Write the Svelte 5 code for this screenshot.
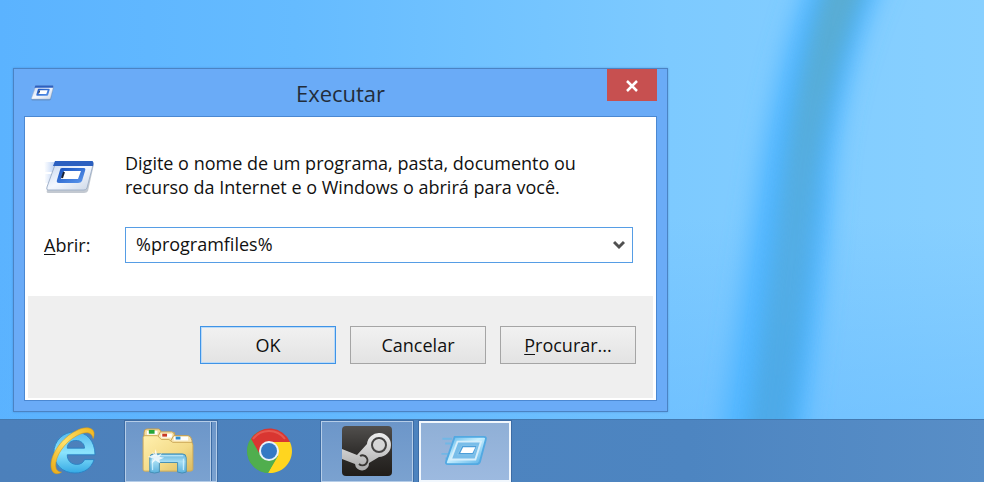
<script>
  let command = $state('%programfiles%');

  const tasks = [
    { id: 'ie', name: 'Internet Explorer', state: '' },
    { id: 'explorer', name: 'Windows Explorer', state: 'open stacked' },
    { id: 'chrome', name: 'Google Chrome', state: '' },
    { id: 'steam', name: 'Steam', state: 'open' },
    { id: 'run', name: 'Executar', state: 'open active' }
  ];
</script>

{#snippet runIcon(cls)}
  <svg class={cls} viewBox="0 0 50 34" aria-hidden="true">
    <defs>
      <linearGradient id="run-trail" x1="0" x2="1">
        <stop offset="0" stop-color="#8fb4f0" stop-opacity="0" />
        <stop offset="1" stop-color="#7fa8ec" />
      </linearGradient>
      <linearGradient id="run-body" x1="0" y1="0" x2="1" y2="1">
        <stop offset="0" stop-color="#c3d4ee" />
        <stop offset="0.5" stop-color="#f4f8ff" />
        <stop offset="1" stop-color="#cbd6e6" />
      </linearGradient>
      <linearGradient id="run-inner" x1="0" y1="0" x2="1" y2="1">
        <stop offset="0" stop-color="#164fbd" />
        <stop offset="1" stop-color="#5c98ee" />
      </linearGradient>
    </defs>
    <path d="M0 2H14L9 12H1zM1 14H8L5 23H1z" fill="url(#run-trail)" opacity="0.7" />
    <path d="M12 4H50L44 31Q43 33 40 33H4Q2 33 3 30z" fill="#53647a" opacity="0.35" />
    <path d="M12 2H48Q50 2 49 5L43 28Q42 30 40 30H4Q2 30 3 27z" fill="url(#run-body)" stroke="#a3b3ca" />
    <path d="M11 1H48Q50 1 49 6H9z" fill="#2c60c0" />
    <path d="M18 8H40Q42 8 41 11L38 21Q37 23 34 23H15Q12 23 13 20L16 10Q16 8 18 8z" fill="url(#run-inner)" />
    <path d="M20 11H37L34 19H17z" fill="#fff" />
    <path d="M20 12L18 18" stroke="#151f33" stroke-width="2" />
  </svg>
{/snippet}

<div class="screen">
  <svg class="wallpaper" viewBox="0 0 984 482" preserveAspectRatio="none" aria-hidden="true">
    <defs>
      <linearGradient id="sky" x1="0" x2="1">
        <stop offset="0" stop-color="#5bb3ff" />
        <stop offset="0.3" stop-color="#65bbff" />
        <stop offset="0.68" stop-color="#7dcaff" />
        <stop offset="1" stop-color="#88d0ff" />
      </linearGradient>
      <linearGradient id="floor" x1="0" y1="0" x2="0" y2="1">
        <stop offset="0.45" stop-color="#5ab2ff" stop-opacity="0" />
        <stop offset="0.9" stop-color="#5ab2ff" stop-opacity="0.4" />
      </linearGradient>
      <linearGradient id="stem" x1="0" y1="0" x2="0" y2="1">
        <stop offset="0" stop-color="#5cabc8" />
        <stop offset="0.5" stop-color="#54ace0" />
        <stop offset="1" stop-color="#49a5e6" />
      </linearGradient>
      <filter id="soft" x="-50%" y="-10%" width="200%" height="120%"><feGaussianBlur stdDeviation="12" /></filter>
      <filter id="softer" x="-50%" y="-10%" width="200%" height="120%"><feGaussianBlur stdDeviation="9" /></filter>
    </defs>
    <rect width="984" height="482" fill="url(#sky)" />
    <rect width="984" height="482" fill="url(#floor)" />
    <path d="M816 -40L892 -40Q848 50 834 160Q824 300 802 430L796 520L712 520L722 430Q742 290 757 190Q776 60 816 -40z" fill="#4fb5ff" filter="url(#soft)" />
    <path d="M834 -40L876 -40Q834 60 819 170Q808 300 790 430L784 520L740 520L748 430Q768 290 782 190Q798 60 834 -40z" fill="url(#stem)" opacity="0.85" filter="url(#softer)" />
  </svg>

  <main class="desktop">
    <section class="window" aria-labelledby="title">
      <header class="titlebar">
        {@render runIcon('title-icon')}
        <h1 id="title">Executar</h1>
        <button class="close" aria-label="Fechar">
          <svg viewBox="0 0 14 12" aria-hidden="true"><path d="M2 1L12 11M12 1L2 11" /></svg>
        </button>
      </header>

      <form class="client" onsubmit={(e) => e.preventDefault()}>
        <div class="content">
          {@render runIcon('big-icon')}
          <p>Digite o nome de um programa, pasta, documento ou recurso da Internet e o Windows o abrirá para você.</p>
          <label for="command"><u>A</u>brir:</label>
          <div class="combo">
            <input id="command" type="text" bind:value={command} spellcheck="false" autocomplete="off" />
            <button type="button" class="arrow" aria-label="Mostrar lista">
              <svg viewBox="0 0 12 10" aria-hidden="true"><path d="M1 2L6 7L11 2" /></svg>
            </button>
          </div>
        </div>
        <div class="actions">
          <button type="submit" class="default">OK</button>
          <button type="button">Cancelar</button>
          <button type="button"><span><u>P</u>rocurar...</span></button>
        </div>
      </form>
    </section>
  </main>

  <nav class="taskbar">
    {#each tasks as task (task.id)}
      <button class="task {task.state}" aria-label={task.name}>
        {#if task.id === 'ie'}
          <svg class="ie" viewBox="0 0 48 50" aria-hidden="true">
            <defs>
              <linearGradient id="ie-blue" x1="0" y1="0" x2="0" y2="1">
                <stop offset="0" stop-color="#55b9ed" />
                <stop offset="0.5" stop-color="#8be4fd" />
                <stop offset="1" stop-color="#35a9e4" />
              </linearGradient>
              <linearGradient id="ie-gold" x1="0" y1="1" x2="1" y2="0">
                <stop offset="0" stop-color="#e9a913" />
                <stop offset="0.5" stop-color="#ffe16a" />
                <stop offset="1" stop-color="#f0b51c" />
              </linearGradient>
            </defs>
            <path fill-rule="evenodd" d="M26 5C38 5 47 14 47 29H18C18 35 22 39 28 39C32 39 35 37 36 34H46C43 43 36 48 26 48C13 48 4 39 4 27C4 14 14 5 26 5zM18 22H36C36 17 32 14 27 14C22 14 18 17 18 22z" fill="url(#ie-blue)" stroke="#2b83c4" />
            <path d="M12 47C7 51 1 48 1 40C1 27 13 11 27 4C36 -1 45 0 46 6C46 8 46 10 45 12C44 5 37 4 28 9C15 16 5 31 6 41C6 45 9 47 12 47z" fill="url(#ie-gold)" stroke="#d79a17" stroke-width="0.6" />
          </svg>
        {:else if task.id === 'explorer'}
          <svg class="folder" viewBox="0 0 54 48" aria-hidden="true">
            <defs>
              <linearGradient id="folder-front" x1="0" y1="0" x2="1" y2="1">
                <stop offset="0" stop-color="#fff0ae" />
                <stop offset="0.6" stop-color="#f3da87" />
                <stop offset="1" stop-color="#d9b95f" />
              </linearGradient>
              <linearGradient id="folder-stand" x1="0" y1="0" x2="0" y2="1">
                <stop offset="0" stop-color="#62b2db" />
                <stop offset="0.4" stop-color="#a4dcf3" />
                <stop offset="1" stop-color="#5ab1dd" />
              </linearGradient>
            </defs>
            <path d="M2 5Q2 1 5 1H17Q19 1 20 5H34V42H2z" fill="#f5dda0" stroke="#c49d4c" />
            <path d="M5 3H16V7H5z" fill="#fff" /><path d="M7 2H13V6H7z" fill="#25a638" />
            <path d="M17 8L19 4H31Q33 4 34 8H46V40H17z" fill="#f8e6af" stroke="#c9a45a" />
            <path d="M20 6H31V10H20z" fill="#fff" /><path d="M21 6H26V9H21z" fill="#c93b24" />
            <path d="M30 13L33 8H48Q51 8 52 13V40H30z" fill="#f7e5b0" stroke="#c29d51" />
            <path d="M33 9H48V13H33z" fill="#fff" /><path d="M35 9H40V12H35z" fill="#2c8dd0" />
            <path d="M1 10Q1 8 3 8H16L20 12H28L32 15H51Q53 15 53 18V43Q53 45 50 45H3Q1 45 1 43z" fill="url(#folder-front)" stroke="#ceaa59" />
            <path d="M8 46V31Q8 27 12 27H42Q46 27 46 31V46Q42 48 37 46V36H18V46Q13 48 8 46z" fill="url(#folder-stand)" stroke="#448eb5" />
            <path d="M11 29H43M11 32V44M43 32V44" stroke="#d5f5ff" fill="none" />
            <path d="M14 22L16 29L21 26L18 30L23 31L18 33L19 37L14 34L10 37L12 32L6 30L12 28L10 25L13 27z" fill="#fff" opacity="0.8" />
          </svg>
        {:else if task.id === 'chrome'}
          <svg class="chrome" viewBox="0 0 46 46" aria-hidden="true">
            <circle cx="23" cy="23" r="22" fill="#4eab4a" />
            <path d="M5 11A22 22 0 0 1 44 14H23L13 25z" fill="#d93631" />
            <path d="M44 14A22 22 0 0 1 22 45L32 28L23 14z" fill="#ffd51f" />
            <path d="M5 11A22 22 0 0 0 22 45L31 28L14 27z" fill="#50ae4e" />
            <circle cx="23" cy="23" r="10" fill="#e9f3fa" />
            <circle cx="23" cy="23" r="8" fill="#3479c4" />
            <path d="M7 11A20 20 0 0 1 39 11" fill="none" stroke="#fa8d7b" opacity="0.4" stroke-width="2" />
          </svg>
        {:else if task.id === 'steam'}
          <svg class="steam" viewBox="0 0 50 50" aria-hidden="true">
            <defs>
              <linearGradient id="steam-back" x1="0" y1="0" x2="0" y2="1">
                <stop offset="0" stop-color="#514f4d" />
                <stop offset="0.5" stop-color="#32302e" />
                <stop offset="1" stop-color="#201d1a" />
              </linearGradient>
              <linearGradient id="steam-arm" x1="0" y1="0" x2="0" y2="1">
                <stop offset="0" stop-color="#eeeeee" />
                <stop offset="1" stop-color="#aaaaaa" />
              </linearGradient>
            </defs>
            <rect width="50" height="50" rx="4" fill="url(#steam-back)" />
            <path d="M0 23L15 29L25 18A12 12 0 1 1 37 31L27 37A7 7 0 0 1 13 38L0 33z" fill="url(#steam-arm)" />
            <circle cx="37" cy="19" r="7" fill="none" stroke="#454443" stroke-width="2" />
            <circle cx="37" cy="19" r="5" fill="#d6d6d6" />
            <path d="M18 30A5 5 0 1 1 17 38" fill="none" stroke="#393734" stroke-width="2" />
          </svg>
        {:else}
          <svg class="run" viewBox="0 0 50 34" aria-hidden="true">
            <defs>
              <linearGradient id="glass" x1="0" y1="0" x2="1" y2="1">
                <stop offset="0" stop-color="#58b2e7" />
                <stop offset="0.45" stop-color="#c8f0ff" />
                <stop offset="1" stop-color="#4fabe5" />
              </linearGradient>
            </defs>
            <path d="M1 4H11M4 9H10M0 20H7M4 25H6" stroke="#71b7e5" stroke-width="2" />
            <path d="M14 2H45Q48 2 47 5L41 28Q40 31 37 31H7Q4 31 5 28z" fill="url(#glass)" stroke="#52a9e2" stroke-width="2" />
            <path d="M17 7H42L36 26H10z" fill="#78bde9" stroke="#d5eefb" stroke-width="2" />
            <path d="M22 11H38L34 21H17z" fill="#4c9ed9" stroke="#8cc8ec" />
            <path d="M23 13H36L33 19H20z" fill="#fff" />
          </svg>
        {/if}
      </button>
    {/each}
  </nav>
</div>

<style>
  :global(body) {
    margin: 0;
  }
  .screen {
    position: relative;
    display: flex;
    flex-direction: column;
    min-height: 100vh;
    overflow: hidden;
    color: #111;
    font-family: "Open Sans", "Noto Sans", sans-serif;
    font-size: 18px;
    line-height: 24px;
  }
  .wallpaper {
    position: absolute;
    inset: 0;
    width: 100%;
    height: 100%;
    z-index: -1;
  }
  button, input {
    box-sizing: border-box;
    margin: 0;
    padding: 0;
    color: inherit;
    font: inherit;
  }
  .desktop {
    flex: 1;
    padding: 68px 13px 7px;
  }
  .window {
    box-sizing: border-box;
    max-width: 655px;
    padding: 0 10px 10px;
    border: 1px solid #4b83c3;
    background: #6aabf7;
    box-shadow: 0 0 2px rgba(40, 100, 170, 0.4);
  }
  .titlebar {
    display: grid;
    grid-template-columns: 50px 1fr 50px;
    height: 47px;
  }
  .title-icon {
    align-self: center;
    width: 24px;
    height: 16px;
    margin-left: 6px;
  }
  h1 {
    margin: 0;
    color: #222d3b;
    font-size: 22px;
    font-weight: 400;
    line-height: 48px;
    text-align: center;
  }
  .close {
    display: grid;
    place-items: center;
    height: 32px;
    border: 0;
    background: #c75050;
  }
  .close svg {
    width: 14px;
    height: 12px;
    margin-top: 2px;
    fill: none;
    stroke: #fff;
    stroke-width: 2.5;
  }
  .client {
    padding-bottom: 2px;
    border: 1px solid #4b88d2;
    background: #fff;
  }
  .content {
    display: grid;
    grid-template-columns: 81px 1fr;
    row-gap: 28px;
    align-items: center;
    padding: 34px 23px 33px 19px;
  }
  .big-icon {
    width: 50px;
    height: 34px;
    margin-top: 4px;
  }
  .content p {
    max-width: 480px;
    margin: 0;
  }
  .combo {
    display: flex;
    box-sizing: border-box;
    height: 36px;
    border: 1px solid #569de5;
    background: #fff;
  }
  .combo input {
    flex: 1;
    min-width: 0;
    padding: 0 10px 2px;
    border: 0;
    outline: 0;
    background: none;
  }
  .arrow {
    display: grid;
    place-items: center;
    width: 26px;
    border: 0;
    background: none;
  }
  .arrow svg {
    width: 12px;
    height: 10px;
    fill: none;
    stroke: #505050;
    stroke-width: 3;
  }
  u {
    text-underline-offset: 2px;
  }
  .actions {
    display: flex;
    justify-content: flex-end;
    gap: 14px;
    margin: 0 3px;
    padding: 30px 17px 34px;
    background: #efefef;
  }
  .actions button {
    width: 136px;
    height: 38px;
    border: 1px solid #a5a5a5;
    background: linear-gradient(#f1f1f1, #e3e3e3);
  }
  .actions .default {
    border-color: #3f93e6;
    box-shadow: inset 0 0 0 1px #b9daf8;
  }
  .taskbar {
    display: flex;
    gap: 4px;
    box-sizing: border-box;
    height: 64px;
    padding: 0 26px;
    border-top: 1px solid #4379b0;
    background: linear-gradient(90deg, #4c80bb, #4d85c1 70%, #588ec7);
  }
  .task {
    display: grid;
    place-items: center;
    width: 94px;
    height: 63px;
    padding-bottom: 2px;
    border: 1px solid transparent;
    background: none;
  }
  .open {
    border-color: #3c6ca5;
    background: linear-gradient(#6c96c9, #7ba2d0);
    box-shadow: inset 0 0 0 1px #b5cde8;
  }
  .stacked {
    padding-right: 7px;
    background: linear-gradient(90deg, transparent 85px, #b5cde8 85px, #b5cde8 86px, #3c6ca5 86px, #3c6ca5 87px, transparent 87px), linear-gradient(#6c96c9, #7ba2d0);
  }
  .active {
    background: linear-gradient(#8fafd6, #9dbae0);
    box-shadow: inset 0 0 0 2px #f1f7fd;
  }
  .ie {
    width: 46px;
    height: 48px;
  }
  .folder {
    width: 52px;
    height: 46px;
  }
  .chrome {
    width: 46px;
    height: 46px;
  }
  .steam {
    width: 50px;
    height: 50px;
  }
  .run {
    width: 48px;
    height: 32px;
  }
</style>
